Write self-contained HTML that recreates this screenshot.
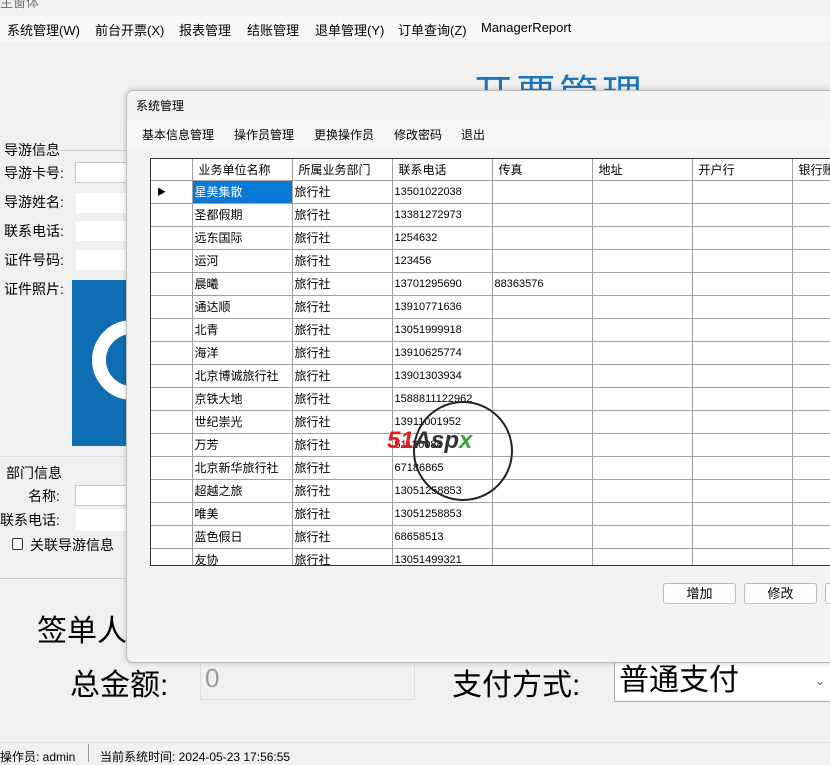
<!DOCTYPE html><html><head><meta charset="utf-8"><style>
*{margin:0;padding:0;box-sizing:border-box}
body{width:830px;height:764px;background:#f0f0f0;font-family:"Liberation Sans","Noto Sans CJK SC",sans-serif;position:relative;overflow:hidden;font-size:13px;color:#000}
.a{position:absolute;white-space:nowrap}
.menu{position:absolute;left:0;top:16px;width:830px;height:26px;background:#f7f7f7}
.menu span{position:absolute;top:4px;font-size:13px}
.inp{position:absolute;background:#fff;border:1px solid #c8c8c8}
.dlg{position:absolute;left:126px;top:90px;width:720px;height:573px;background:#f3f3f3;border:1px solid #bbb;border-radius:7px;box-shadow:0 0 6px rgba(0,0,0,.2);overflow:hidden}
.grid{position:absolute;left:23px;top:67px;width:700px;height:408px;background:#fff;border:1px solid #333;border-right:none;overflow:hidden}
table{border-collapse:collapse;font-size:12px}
td{height:23px;border-right:1px solid #a0a0a0;border-bottom:1px solid #a0a0a0;padding:0 2px;white-space:nowrap;overflow:hidden}
.h td{height:21px;font-size:12px;padding-left:6px}
.n{font-size:11px}
.btn{position:absolute;top:492px;width:73px;height:21px;border:1px solid #bbb;border-radius:3px;background:#fdfdfd;text-align:center;font-size:13px;line-height:19px}
</style></head><body>
<div class="a" style="left:0;top:-8px;font-size:13px;color:#777">主窗体</div>
<div class="menu"><span style="left:7px">系统管理(W)</span><span style="left:95px">前台开票(X)</span><span style="left:179px">报表管理</span><span style="left:247px">结账管理</span><span style="left:315px">退单管理(Y)</span><span style="left:398px">订单查询(Z)</span><span style="left:481px">ManagerReport</span></div>
<div class="a" style="left:473px;top:62px;font-size:40px;color:#1a75bc;letter-spacing:3px">开票管理</div>
<div class="a" style="left:4px;top:140px;font-size:14px">导游信息</div>
<div class="a" style="left:40px;top:150px;width:90px;border-top:1px solid #ccc"></div>
<div class="a" style="left:4px;top:163px;font-size:14px">导游卡号:</div><div class="inp" style="left:75px;top:162px;width:60px;height:21px"></div>
<div class="a" style="left:4px;top:192px;font-size:14px">导游姓名:</div><div class="inp" style="left:75px;top:192px;width:60px;height:22px;border-color:#eee"></div>
<div class="a" style="left:4px;top:221px;font-size:14px">联系电话:</div><div class="inp" style="left:75px;top:220px;width:60px;height:22px;border-color:#eee"></div>
<div class="a" style="left:4px;top:250px;font-size:14px">证件号码:</div><div class="inp" style="left:75px;top:249px;width:60px;height:22px;border-color:#eee"></div>
<div class="a" style="left:4px;top:279px;font-size:14px">证件照片:</div>
<div class="a" style="left:72px;top:280px;width:60px;height:166px;background:#0f6db3;overflow:hidden"><div style="position:absolute;left:20px;top:40px;width:80px;height:80px;border-radius:50%;border:14px solid #fff"></div></div>
<div class="a" style="left:0;top:456px;width:130px;border-top:1px solid #ddd"></div>
<div class="a" style="left:6px;top:463px;font-size:14px">部门信息</div>
<div class="a" style="left:28px;top:486px;font-size:14px">名称:</div><div class="inp" style="left:75px;top:485px;width:60px;height:21px"></div>
<div class="a" style="left:0;top:510px;font-size:14px">联系电话:</div><div class="inp" style="left:75px;top:508px;width:60px;height:24px;border-color:#eee"></div>
<div class="a" style="left:12px;top:538px;width:11px;height:12px;border:1px solid #333;border-radius:2px;background:#fff"></div>
<div class="a" style="left:30px;top:535px;font-size:14px">关联导游信息</div>
<div class="a" style="left:0;top:578px;width:130px;border-top:1px solid #ccc"></div>
<div class="a" style="left:37px;top:606px;font-size:30px">签单人</div>
<div class="a" style="left:70px;top:660px;font-size:30px">总金额:</div>
<div class="a" style="left:200px;top:662px;width:215px;height:38px;border:1px solid #ddd;background:#f0f0f0;font-size:26px;color:#999;padding-left:4px">0</div>
<div class="a" style="left:452px;top:660px;font-size:30px">支付方式:</div>
<div class="a" style="left:614px;top:662px;width:220px;height:40px;border:1px solid #aaa;background:#fff;font-size:30px;padding-left:4px;line-height:36px">普通支付<span style="position:absolute;left:200px;top:0;font-size:12px;color:#555">⌄</span></div>
<div class="a" style="left:0;top:742px;width:830px;height:22px;background:#f0f0f0;border-top:1px solid #ddd"></div>
<div class="a" style="left:0;top:748px;font-size:12px">操作员: admin</div>
<div class="a" style="left:88px;top:744px;height:18px;border-left:1px solid #999"></div>
<div class="a" style="left:100px;top:748px;font-size:12px">当前系统时间: 2024-05-23 17:56:55</div>

<div class="dlg">
<div class="a" style="left:9px;top:6px;font-size:12px">系统管理</div>
<div class="a" style="left:0;top:30px;width:720px;height:28px;background:#f7f7f7"></div>
<div class="a" style="left:15px;top:35px;font-size:12px">基本信息管理</div>
<div class="a" style="left:107px;top:35px;font-size:12px">操作员管理</div>
<div class="a" style="left:187px;top:35px;font-size:12px">更换操作员</div>
<div class="a" style="left:267px;top:35px;font-size:12px">修改密码</div>
<div class="a" style="left:334px;top:35px;font-size:12px">退出</div>
<div class="grid"><table style="table-layout:fixed;width:741px">
<colgroup><col style="width:41px"><col style="width:100px"><col style="width:100px"><col style="width:100px"><col style="width:100px"><col style="width:100px"><col style="width:100px"><col style="width:100px"></colgroup>
<tr class="h"><td></td><td>业务单位名称</td><td>所属业务部门</td><td>联系电话</td><td>传真</td><td>地址</td><td>开户行</td><td>银行账号</td></tr>
<tr><td style="font-size:9px;padding-left:6px">▶</td><td style="background:#0a78d7;color:#fff">星美集散</td><td>旅行社</td><td class="n">13501022038</td><td></td><td></td><td></td><td></td></tr>
<tr><td></td><td>圣都假期</td><td>旅行社</td><td class="n">13381272973</td><td></td><td></td><td></td><td></td></tr>
<tr><td></td><td>远东国际</td><td>旅行社</td><td class="n">1254632</td><td></td><td></td><td></td><td></td></tr>
<tr><td></td><td>运河</td><td>旅行社</td><td class="n">123456</td><td></td><td></td><td></td><td></td></tr>
<tr><td></td><td>晨曦</td><td>旅行社</td><td class="n">13701295690</td><td class="n">88363576</td><td></td><td></td><td></td></tr>
<tr><td></td><td>通达顺</td><td>旅行社</td><td class="n">13910771636</td><td></td><td></td><td></td><td></td></tr>
<tr><td></td><td>北青</td><td>旅行社</td><td class="n">13051999918</td><td></td><td></td><td></td><td></td></tr>
<tr><td></td><td>海洋</td><td>旅行社</td><td class="n">13910625774</td><td></td><td></td><td></td><td></td></tr>
<tr><td></td><td>北京博诚旅行社</td><td>旅行社</td><td class="n">13901303934</td><td></td><td></td><td></td><td></td></tr>
<tr><td></td><td>京铁大地</td><td>旅行社</td><td class="n">1588811122962</td><td></td><td></td><td></td><td></td></tr>
<tr><td></td><td>世纪崇光</td><td>旅行社</td><td class="n">13911001952</td><td></td><td></td><td></td><td></td></tr>
<tr><td></td><td>万芳</td><td>旅行社</td><td class="n">51120088</td><td></td><td></td><td></td><td></td></tr>
<tr><td></td><td>北京新华旅行社</td><td>旅行社</td><td class="n">67186865</td><td></td><td></td><td></td><td></td></tr>
<tr><td></td><td>超越之旅</td><td>旅行社</td><td class="n">13051258853</td><td></td><td></td><td></td><td></td></tr>
<tr><td></td><td>唯美</td><td>旅行社</td><td class="n">13051258853</td><td></td><td></td><td></td><td></td></tr>
<tr><td></td><td>蓝色假日</td><td>旅行社</td><td class="n">68658513</td><td></td><td></td><td></td><td></td></tr>
<tr><td></td><td>友协</td><td>旅行社</td><td class="n">13051499321</td><td></td><td></td><td></td><td></td></tr>
</table></div>
<div class="a" style="left:286px;top:310px;width:100px;height:100px;border:2px solid #222;border-radius:50%"></div>
<div class="a" style="left:260px;top:336px;font-size:24px;font-weight:bold;font-style:italic"><span style="color:#e02020">51</span><span style="color:#333">Asp</span><span style="color:#3a3">x</span></div>
<div class="btn" style="left:536px">增加</div>
<div class="btn" style="left:617px">修改</div>
<div class="btn" style="left:698px">删除</div>
</div>
</body></html>
